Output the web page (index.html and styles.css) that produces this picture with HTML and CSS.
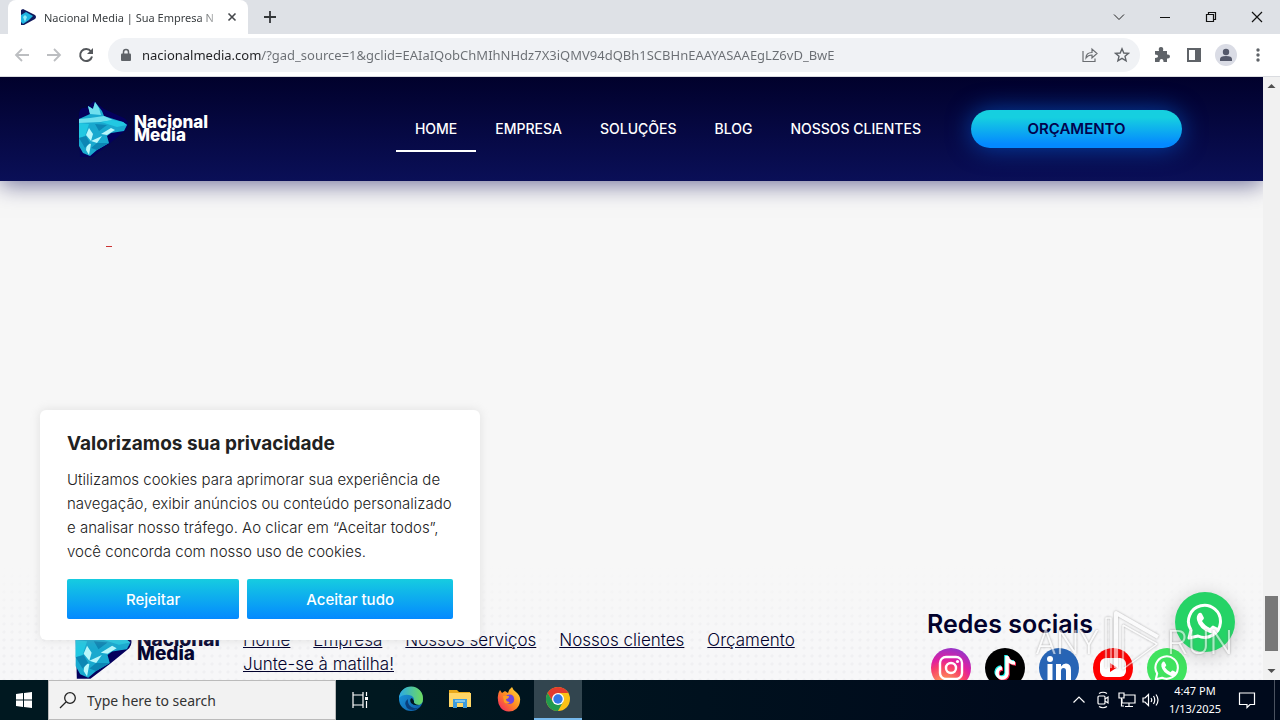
FILE: index.html
```html
<!DOCTYPE html>
<html lang="pt-BR">
<head>
<meta charset="utf-8">
<meta name="viewport" content="width=device-width, initial-scale=1">
<title>Nacional Media | Sua Empresa</title>
<link rel="stylesheet" href="styles.css">
</head>
<body>
<svg class="defs" aria-hidden="true">
  <defs>
    <symbol id="wolf" viewBox="0 0 52 58">
      <path class="navy" d="M2 20Q1 6 9 8L17 1 27 9 47 18Q54 23 49 30L32 44 15 57H3Z"/>
      <path fill="#19a9cf" d="M2 19 13 14 11 6 16 9 18 2 25 11 27 16 46 22 50 25 47 31 34 33 30 36 32 43 20 50 13 56 6 53 2 46Z"/>
      <path fill="#6fe0ee" d="M11 6 16 9 18 2 22 8 24 15 13 14ZM13 18 27 16 36 20 24 22 2 23 2 19Z"/>
      <path fill="#22c8e2" d="M36 20 46 22 50 25 40 27 24 22ZM2 23 12 24 8 36 2 38Z"/>
      <path fill="#b9f7fb" d="M12 28 16 34 14 41 9 35ZM24 34 34 28 38 30 30 35ZM14 41 25 36 20 43ZM10 43 14 44 12 55 9 50Z"/>
      <path fill="#0c86b4" d="M18 24 30 25 22 31ZM2 38 9 36 13 43 8 48ZM20 43 32 43 20 50 14 48Z"/>
    </symbol>
    <symbol id="whats" viewBox="0 0 40 40">
      <path d="M4 36 6 28A16 16 0 1 1 13 34Z" fill="none" stroke="#fff" stroke-width="3" stroke-linejoin="round"/>
      <path fill="#fff" d="M14 11q2-1 3 1l2 4q0 1-2 3 3 5 8 7l2-2q1-1 2 0l4 2q1 1 0 3-3 4-8 2Q14 27 12 18q-1-4 2-7Z"/>
    </symbol>
    <linearGradient id="edge-blue" x1="0" y1="0" x2="1" y2="1"><stop stop-color="#1b9de2"/><stop offset="1" stop-color="#0c59a4"/></linearGradient>
    <linearGradient id="edge-green"><stop stop-color="#2aa9e8"/><stop offset="1" stop-color="#6fdc5c"/></linearGradient>
    <linearGradient id="fox" x1="1" y1="0" x2="0" y2="1"><stop stop-color="#ffe43a"/><stop offset=".5" stop-color="#ff8a22"/><stop offset="1" stop-color="#f2176b"/></linearGradient>
  </defs>
</svg>

<div class="tabstrip">
  <div class="tab">
    <svg class="favicon" width="16" height="16" viewBox="0 0 16 16"><path fill="#101a5c" d="M3 0 15 6q2 2 0 4L4 16H1V1Z"/><path fill="#1fb4e0" d="M1 6 6 3 13 7 9 11 3 15 1 13Z"/><path fill="#8cecf8" d="M3 8 5 6 7 8 5 13Z"/></svg>
    <span class="tab-title">Nacional Media | Sua Empresa N</span>
    <button class="plain" aria-label="Close tab"><svg width="10" height="10" viewBox="0 0 10 10"><path d="M1.500 1.500 8.500 8.500M8.500 1.500 1.500 8.500" stroke="#45484c" stroke-width="1.600"/></svg></button>
  </div>
  <button class="plain new-tab" aria-label="New tab"><svg width="12" height="12" viewBox="0 0 12 12"><path d="M6 0V12M0 6H12" stroke="#333639" stroke-width="1.800"/></svg></button>
  <div class="window-buttons">
    <button class="plain" aria-label="Search tabs"><svg width="12" height="12" viewBox="0 0 12 12"><path d="M1 3.500 6 8.500 11 3.500" fill="none" stroke="#222"/></svg></button>
    <button class="plain" aria-label="Minimize"><svg width="12" height="12" viewBox="0 0 12 12"><path d="M1 6.500H11" stroke="#111"/></svg></button>
    <button class="plain" aria-label="Restore"><svg width="12" height="12" viewBox="0 0 12 12"><path d="M1.500 3.500H8.500V10.500H1.500ZM3.500 3.500V1.500H10.500V8.500H8.500" fill="none" stroke="#111" stroke-width="1.200"/></svg></button>
    <button class="plain" aria-label="Close"><svg width="12" height="12" viewBox="0 0 12 12"><path d="M1 1 11 11M11 1 1 11" stroke="#111" stroke-width="1.200"/></svg></button>
  </div>
</div>

<div class="toolbar">
  <div class="history">
    <button class="plain" aria-label="Back"><svg width="16" height="16" viewBox="0 0 16 16"><path d="M15 8H2M8 2 2 8 8 14" fill="none" stroke="#bcbec1" stroke-width="1.800"/></svg></button>
    <button class="plain" aria-label="Forward"><svg width="16" height="16" viewBox="0 0 16 16"><path d="M1 8H14M8 2 14 8 8 14" fill="none" stroke="#bcbec1" stroke-width="1.800"/></svg></button>
    <button class="plain" aria-label="Reload"><svg width="16" height="16" viewBox="0 0 16 16"><path d="M13 4.500A6 6 0 1 0 14 9.500" fill="none" stroke="#54575b" stroke-width="2"/><path d="M15 1V7H9Z" fill="#54575b"/></svg></button>
  </div>
  <div class="omnibox">
    <svg width="12" height="14" viewBox="0 0 12 14"><path d="M3.500 6V4a2.500 2.500 0 0 1 5 0V6" fill="none" stroke="#5f6368" stroke-width="1.500"/><rect x="1" y="5.500" width="10" height="7.500" rx="1" fill="#5f6368"/></svg>
    <input class="url" type="text" aria-label="Address" value="nacionalmedia.com/?gad_source=1&amp;gclid=EAIaIQobChMIhNHdz7X3iQMV94dQBh1SCBHnEAAYASAAEgLZ6vD_BwE">
    <button class="plain" aria-label="Share"><svg width="16" height="16" viewBox="0 0 16 16"><path d="M1 4V14.500H13V11.500M4 11Q4 5.500 10 5.500V2L15 6.500 10 11V8Q6 8 4 11Z" fill="none" stroke="#6b6e72" stroke-width="1.200"/></svg></button>
    <button class="plain" aria-label="Bookmark"><svg width="16" height="16" viewBox="0 0 16 16"><path d="M8 1.800 9.800 6 14.500 6.300 11 9.300 12.100 13.900 8 11.400 3.900 13.900 5 9.300 1.500 6.300 6.200 6Z" fill="none" stroke="#5f6368" stroke-width="1.400"/></svg></button>
  </div>
  <div class="tools">
    <button class="plain" aria-label="Extensions"><svg width="16" height="16" viewBox="0 0 16 16"><path fill="#5f6368" d="M1 4H5Q4 0 7 0T9 4H13V7.500Q16 7 16 9.500T13 11.500V15H9.500Q9.500 12 7.500 12T5.500 15H1V11Q4 11 4 9.300T1 7.500Z"/></svg></button>
    <button class="plain" aria-label="Side panel"><svg width="16" height="16" viewBox="0 0 16 16"><path d="M2 2H14V14H2Z" fill="none" stroke="#5f6368" stroke-width="2"/><path d="M9 2H14V14H9Z" fill="#5f6368"/></svg></button>
    <button class="plain" aria-label="Profile"><svg width="22" height="22" viewBox="0 0 22 22"><circle cx="11" cy="11" r="11" fill="#dadce5"/><circle cx="11" cy="8" r="3.200" fill="#54586a"/><path d="M5 17V15Q5 12 11 12T17 15V17Z" fill="#54586a"/></svg></button>
    <button class="plain" aria-label="Menu"><svg width="16" height="16" viewBox="0 0 16 16"><g fill="#5f6368"><circle cx="8" cy="3" r="1.700"/><circle cx="8" cy="8" r="1.700"/><circle cx="8" cy="13" r="1.700"/></g></svg></button>
  </div>
</div>

<div class="viewport">
  <div class="page">
    <header class="site-header">
      <a class="brand" href="#"><svg width="52" height="58"><use href="#wolf"/></svg><span>Nacional<br>Media</span></a>
      <nav class="main-nav">
        <a class="active" href="#">HOME</a>
        <a href="#">EMPRESA</a>
        <a href="#">SOLUÇÕES</a>
        <a href="#">BLOG</a>
        <a href="#">NOSSOS CLIENTES</a>
      </nav>
      <a class="quote" href="#">ORÇAMENTO</a>
    </header>
    <main class="content"><span class="dash"></span></main>
    <footer class="site-footer">
      <a class="brand brand-dark" href="#"><svg width="60" height="66" viewBox="0 0 52 58"><use href="#wolf"/></svg><span>Nacional<br>Media</span></a>
      <nav class="footer-nav">
        <a href="#">Home</a>
        <a href="#">Empresa</a>
        <a href="#">Nossos serviços</a>
        <a href="#">Nossos clientes</a>
        <a href="#">Orçamento</a>
        <a href="#">Junte-se à matilha!</a>
      </nav>
      <section class="social">
        <h2>Redes sociais</h2>
        <div class="social-icons">
          <a class="insta" href="#" aria-label="Instagram"><svg width="26" height="26" viewBox="0 0 26 26"><g fill="none" stroke="#fff" stroke-width="2.400"><rect x="2" y="2" width="22" height="22" rx="6"/><circle cx="13" cy="13" r="5"/></g><circle cx="19.500" cy="6.500" r="1.600" fill="#fff"/></svg></a>
          <a class="tiktok" href="#" aria-label="TikTok"><svg width="26" height="28" viewBox="0 0 26 28"><g fill="none" stroke-width="3.500"><path stroke="#25f4ee" d="M14 1V19A5 5 0 1 1 9 13M14 2Q16 8 22 8"/><path stroke="#fe2c55" d="M16 3V21A5 5 0 1 1 11 15M16 4Q18 10 24 10"/><path stroke="#fff" d="M15 2V20A5 5 0 1 1 10 14M15 3Q17 9 23 9"/></g></svg></a>
          <a class="linkedin" href="#" aria-label="LinkedIn"><svg width="26" height="26" viewBox="0 0 26 26"><g fill="#fff"><circle cx="4" cy="4" r="3"/><path d="M1.500 9H6.500V25H1.500ZM10 9H15V11.500Q17 8.500 20 8.500 25 8.500 25 15V25H20V16Q20 13 17.500 13T15 16V25H10Z"/></g></svg></a>
          <a class="youtube" href="#" aria-label="YouTube"><svg width="28" height="22" viewBox="0 0 28 22"><rect x="1" y="1" width="26" height="19" rx="6" fill="#fff"/><path d="M11 6 18 10.500 11 15Z" fill="#f00"/></svg></a>
          <a class="whatsapp" href="#" aria-label="WhatsApp"><svg width="28" height="28"><use href="#whats"/></svg></a>
        </div>
      </section>
    </footer>
    <section class="consent" aria-labelledby="consent-title">
      <h2 id="consent-title">Valorizamos sua privacidade</h2>
      <p>Utilizamos cookies para aprimorar sua experiência de<br>navegação, exibir anúncios ou conteúdo personalizado<br>e analisar nosso tráfego. Ao clicar em “Aceitar todos”,<br>você concorda com nosso uso de cookies.</p>
      <div class="consent-buttons"><button>Rejeitar</button><button>Aceitar tudo</button></div>
    </section>
    <a class="chat" href="#" aria-label="Conversar no WhatsApp"><svg width="40" height="40"><use href="#whats"/></svg></a>
    <div class="watermark">
      <span>ANY</span>
      <svg width="60" height="68" viewBox="0 0 60 68"><g fill="none" stroke="#fff" stroke-linejoin="round"><path d="M13 60V5L55 29" stroke-width="4"/><path d="M20 17V61L54 36 20 17M3 60V10H8V60" stroke-width="1.500"/></g></svg>
      <span>RUN</span>
    </div>
  </div>
  <div class="scrollbar" aria-hidden="true">
    <svg width="17" height="17" viewBox="0 0 17 17"><path d="M4.500 11 8.500 7 12.500 11Z" fill="#505050"/></svg>
    <span class="thumb"></span>
    <svg width="17" height="17" viewBox="0 0 17 17"><path d="M4.500 6 8.500 10 12.500 6Z" fill="#505050"/></svg>
  </div>
</div>

<div class="taskbar">
  <button class="plain tile" aria-label="Start"><svg width="16" height="16" viewBox="0 0 16 16"><path fill="#fff" d="M0 2 7 1V7.500H0ZM8 1 16 0V7.500H8ZM0 8.500H7V15L0 14ZM8 8.500H16V16L8 15Z"/></svg></button>
  <label class="search">
    <svg width="18" height="18" viewBox="0 0 18 18"><circle cx="11" cy="7" r="5.300" fill="none" stroke="#222" stroke-width="1.300"/><path d="M7 11 1 17" stroke="#222" stroke-width="1.300"/></svg>
    <input type="text" placeholder="Type here to search" aria-label="Type here to search">
  </label>
  <button class="plain tile" aria-label="Task view"><svg width="18" height="18" viewBox="0 0 18 18"><g fill="none" stroke="#fff" stroke-width="1.200"><path d="M2 1V4H12V1M2 17V14H12V17M2 4V14M12 4V14M15.500 1V5M15.500 10V17"/></g><path fill="#fff" d="M14 6H17V9H14Z"/></svg></button>
  <div class="apps">
    <button class="plain tile app" aria-label="Edge"><svg width="26" height="26" viewBox="0 0 26 26"><circle cx="13" cy="13" r="12" fill="url(#edge-blue)"/><path fill="url(#edge-green)" d="M1 12A12 12 0 0 1 25 13Q25 19 19 19 15 19 16 16 17 10 11 9 5 8 1 12Z"/><path fill="#0a3f7d" d="M10 13Q9 20 16 22 20 23 23 20 15 27 9 22 5 16 10 13Z"/><path fill="#001722" d="M14 12Q11 13 13 17 16 20 21 19 15 18 16 15Z"/></svg></button>
    <button class="plain tile app" aria-label="File Explorer"><svg width="24" height="22" viewBox="0 0 24 22"><path fill="#e8a91b" d="M1 2H9L11 4H22V8H1Z"/><path fill="#ffd666" d="M1 5H23V19H1Z"/><path fill="#3d9bdc" d="M5 11H19V20H15V15H9V20H5Z"/><path fill="#80c8ef" d="M7 12H17V14H7Z"/></svg></button>
    <button class="plain tile app" aria-label="Firefox"><svg width="26" height="26" viewBox="0 0 26 26"><path fill="url(#fox)" d="M4 4 6 7 9 5 12 7Q13 3 16 1 17 4 20 6 25 10 24 15A11 11 0 0 1 2 14Q1 8 4 4Z"/><path fill="#7046dd" d="M11 9Q17 7 18 12 19 18 13 18 8 17 9 13Z"/><path fill="#ff9d24" d="M7 10 13 10Q13 13 10 13 10 16 14 16 11 19 8 16Z"/></svg></button>
    <button class="plain tile app current" aria-label="Chrome"><svg width="26" height="26" viewBox="0 0 26 26"><circle cx="13" cy="13" r="12" fill="#fbc116"/><path fill="#e33b2e" d="M2.600 7A12 12 0 0 1 23.400 7H13L8 16Z"/><path fill="#229a4d" d="M2.600 7A12 12 0 0 0 13 25L18 16H8Z"/><circle cx="13" cy="13" r="6" fill="#fff"/><circle cx="13" cy="13" r="4.700" fill="#3478e5"/></svg></button>
  </div>
  <div class="tray">
    <button class="plain" aria-label="Show hidden icons"><svg width="14" height="14" viewBox="0 0 14 14"><path d="M1.500 9.500 7 4 12.500 9.500" fill="none" stroke="#fff" stroke-width="1.200"/></svg></button>
    <button class="plain" aria-label="Meet now"><svg width="14" height="18" viewBox="0 0 14 18"><g fill="none" stroke="#fff" stroke-width="1.200"><rect x="2" y="5" width="7" height="8" rx="1"/><path d="M9 8 12 6V12L9 10M3 2.500Q7 0 11 2.500M3 15.500Q7 18 11 15.500"/></g></svg></button>
    <button class="plain" aria-label="Network"><svg width="18" height="16" viewBox="0 0 18 16"><g fill="none" stroke="#fff" stroke-width="1.200"><path d="M6 3H17V11H4V7M11 11V14M7 14.500H15M1 1H6V6H1ZM3.500 6V14H6"/></g></svg></button>
    <button class="plain" aria-label="Volume"><svg width="18" height="16" viewBox="0 0 18 16"><path d="M1 6H3L6.500 2.500V13.500L3 10H1ZM9 6Q10.500 8 9 10M11.500 4Q14 8 11.500 12M14 2.500Q18 8 14 13.500" fill="none" stroke="#fff" stroke-width="1.200"/></svg></button>
    <div class="clock"><time>4:47 PM</time><time>1/13/2025</time></div>
    <button class="plain" aria-label="Notifications"><svg width="18" height="18" viewBox="0 0 18 18"><path d="M1.500 2H16.500V13.500H12L9 16.500V13.500H1.500Z" fill="none" stroke="#fff" stroke-width="1.200"/></svg></button>
  </div>
</div>
</body>
</html>
```
FILE: styles.css
```css
* { box-sizing: border-box; }
body {
  margin: 0;
  height: 100vh;
  display: flex;
  flex-direction: column;
  overflow: hidden;
  font-family: Inter, "Open Sans", sans-serif;
  color: #02022d;
  background: #f7f7f7;
}
a { color: inherit; }
svg { display: block; flex: none; }
.defs { position: absolute; width: 0; height: 0; }
.navy { fill: #04005c; }
.plain {
  display: flex;
  align-items: center;
  justify-content: center;
  padding: 0;
  border: 0;
  background: none;
}

/* Browser chrome */
.tabstrip {
  display: flex;
  flex: none;
  align-items: center;
  height: 34px;
  padding-left: 8px;
  background: #dee1e6;
  font-family: "Noto Sans", sans-serif;
}
.tab {
  display: flex;
  align-items: center;
  gap: 8px;
  width: 240px;
  height: 34px;
  padding: 0 11px 0 12px;
  border-radius: 8px 8px 0 0;
  background: #fff;
}
.tab-title {
  flex: 1;
  overflow: hidden;
  white-space: nowrap;
  font-size: 11px;
  color: #3c4043;
  mask-image: linear-gradient(90deg, #000 88%, #0003);
}
.new-tab { width: 44px; height: 34px; }
.window-buttons { display: flex; height: 28px; margin-left: auto; }
.window-buttons .plain { width: 46px; }
.toolbar {
  display: flex;
  flex: none;
  align-items: center;
  height: 43px;
  padding: 0 6px;
  border-bottom: 1px solid #dadce0;
  background: #fff;
}
.history { display: flex; }
.history .plain, .tools .plain { width: 32px; height: 32px; }
.omnibox {
  display: flex;
  flex: 1;
  align-items: center;
  height: 34px;
  margin: 0 6px;
  padding: 0 10px 0 12px;
  border-radius: 17px;
  background: #f0f2f5;
}
.omnibox .plain { width: 16px; margin-left: 16px; }
.url {
  flex: 1;
  min-width: 0;
  margin-left: 10px;
  padding: 0;
  border: 0;
  outline: 0;
  font: 13px "Noto Sans", sans-serif;
  color: transparent;
  background: linear-gradient(90deg, #202124 119px, #6a6e73 119px);
  background-clip: text;
}
.tools { display: flex; }

/* Web page */
.viewport { display: flex; flex: 1; min-height: 0; }
.page {
  position: relative;
  display: flex;
  flex: 1;
  flex-direction: column;
  min-width: 0;
  overflow: hidden;
  background: #f7f7f7;
}
.site-header {
  display: flex;
  flex: none;
  align-items: center;
  height: 104px;
  padding: 0 81px 0 77px;
  background: linear-gradient(#01012c, #0a0f57);
  box-shadow: 0 4px 22px #02024d88;
}
.brand {
  display: flex;
  align-items: center;
  gap: 5px;
  color: #fff;
  font: 800 17px/13px Inter, sans-serif;
  text-decoration: none;
}
.main-nav { display: flex; margin-left: auto; }
.main-nav a {
  padding: 12px 19px 10px;
  border-bottom: 2px solid transparent;
  color: #fff;
  font-size: 14px;
  font-weight: 500;
  line-height: 22px;
  text-decoration: none;
}
.main-nav .active { border-color: #fff; }
.quote {
  width: 211px;
  margin-left: 31px;
  border-radius: 19px;
  background: linear-gradient(#16cfe0 20%, #0489ff 90%);
  box-shadow: 0 0 24px #0075ff88;
  color: #02024d;
  font-size: 15px;
  font-weight: 600;
  line-height: 38px;
  text-align: center;
  text-decoration: none;
}
.content { flex: 1; padding: 65px 106px; }
.dash { display: block; width: 6px; height: 1px; background: #c33; }
.site-footer {
  display: flex;
  flex: none;
  height: 116px;
  padding: 0 75px 0 73px;
  background:
    linear-gradient(#f7f7f7, #f7f7f700 70%),
    radial-gradient(circle, #f0f0f2 1px, transparent 2px) 0 0 / 8px 8px,
    #f7f7f8;
}
.brand-dark {
  align-self: flex-start;
  width: 170px;
  gap: 4px;
  padding-top: 50px;
  color: #050530;
  font-size: 19px;
  line-height: 14px;
}
.footer-nav {
  display: flex;
  flex: 1;
  flex-wrap: wrap;
  align-content: flex-start;
  column-gap: 23px;
  padding-top: 64px;
  font-size: 17px;
  font-weight: 300;
  line-height: 24px;
}
.social { width: 261px; padding-top: 43px; }
.social h2 { margin: 0; font-size: 25px; font-weight: 600; line-height: 34px; }
.social-icons { display: flex; gap: 14px; padding: 7px 4px; }
.social-icons a {
  display: flex;
  flex: none;
  align-items: center;
  justify-content: center;
  width: 40px;
  height: 40px;
  border-radius: 50%;
}
.insta { background: radial-gradient(circle at 35% 100%, #ffc34a, #f8406a 45%, #e120a0 60%, #6b3fe0); }
.tiktok { background: #000; }
.linkedin { background: #2764b5; }
.youtube { background: #f00; }
.whatsapp { background: #40e35f; }

.consent {
  position: absolute;
  left: 40px;
  bottom: 40px;
  width: 440px;
  padding: 22px 27px 21px;
  border-radius: 6px;
  background: #fff;
  box-shadow: 0 0 10px #acabab4d;
  color: #212121;
}
.consent h2 { margin: 0; font-size: 19px; font-weight: 700; line-height: 24px; }
.consent p { margin: 12px 0 15px; font-size: 15px; font-weight: 300; line-height: 24px; white-space: nowrap; }
.consent-buttons { display: flex; gap: 8px; }
.consent-buttons button {
  flex: 1 1 auto;
  height: 40px;
  border: 0;
  border-radius: 2px;
  background: linear-gradient(#16cce0, #0489ff);
  color: #fff;
  font: 500 15px Inter, sans-serif;
}
.chat {
  position: absolute;
  right: 28px;
  bottom: 28px;
  display: flex;
  align-items: center;
  justify-content: center;
  width: 60px;
  height: 60px;
  border-radius: 50%;
  background: #25d366;
  box-shadow: 0 4px 20px #0003;
}
.watermark {
  position: absolute;
  right: 30px;
  bottom: 4px;
  display: flex;
  align-items: center;
  gap: 4px;
  color: #fff;
  font: 300 33px Roboto, sans-serif;
  opacity: 0.6;
  filter: drop-shadow(0 0 1px #777);
}
.scrollbar {
  display: flex;
  flex-direction: column;
  align-items: center;
  width: 17px;
  background: #f1f1f1;
}
.thumb { width: 13px; height: 55px; margin-top: auto; margin-bottom: 12px; background: #787878; }

/* Taskbar */
.taskbar {
  display: flex;
  flex: none;
  height: 40px;
  background: linear-gradient(90deg, #001820 30%, #000a1c 80%);
  font-family: "Noto Sans", sans-serif;
}
.tile { width: 48px; }
.apps { display: flex; gap: 1px; margin-left: 3px; }
.app { border-bottom: 2px solid transparent; }
.current { background: #32454f; border-color: #76b9ed; }
.search {
  display: flex;
  align-items: center;
  gap: 10px;
  width: 288px;
  padding: 0 11px 0 10px;
  border: 1px solid #bbb;
  background: #f2f2f2;
}
.search input {
  flex: 1;
  min-width: 0;
  padding: 0;
  border: 0;
  outline: 0;
  background: none;
  font: 14px "Noto Sans", sans-serif;
}
.search input::placeholder { color: #333; }
.tray { display: flex; align-items: center; margin-left: auto; margin-right: 5px; border-right: 1px solid #4a5260; padding-right: 15px; }
.tray .plain { width: 24px; height: 40px; }
.clock {
  display: flex;
  flex-direction: column;
  width: 64px;
  margin-right: 8px;
  color: #fff;
  font-size: 11px;
  line-height: 18px;
  text-align: center;
}
```
